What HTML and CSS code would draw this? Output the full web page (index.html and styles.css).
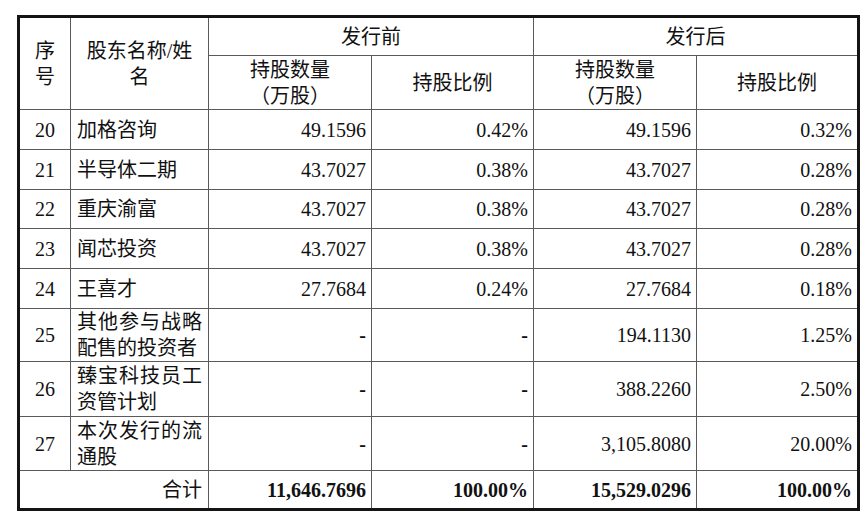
FILE: index.html
```html
<!DOCTYPE html>
<html lang="zh">
<head>
<meta charset="utf-8">
<title>股东持股情况</title>
<link rel="stylesheet" href="styles.css">
</head>
<body>
<div class="page">
<table class="holders">
  <colgroup>
    <col class="c-no">
    <col class="c-name">
    <col class="c-num">
    <col class="c-pct">
    <col class="c-num">
    <col class="c-pct">
  </colgroup>
  <thead>
    <tr class="h1">
      <th rowspan="2" class="center">序<br>号</th>
      <th rowspan="2" class="center">股东名称/姓<br>名</th>
      <th colspan="2" class="center">发行前</th>
      <th colspan="2" class="center">发行后</th>
    </tr>
    <tr class="h2">
      <th class="center">持股数量<br>（万股）</th>
      <th class="center">持股比例</th>
      <th class="center">持股数量<br>（万股）</th>
      <th class="center">持股比例</th>
    </tr>
  </thead>
  <tbody>
    <tr class="r1"><td class="no">20</td><td class="name">加格咨询</td><td class="num">49.1596</td><td class="num">0.42%</td><td class="num">49.1596</td><td class="num">0.32%</td></tr>
    <tr class="r1"><td class="no">21</td><td class="name">半导体二期</td><td class="num">43.7027</td><td class="num">0.38%</td><td class="num">43.7027</td><td class="num">0.28%</td></tr>
    <tr class="r1b"><td class="no">22</td><td class="name">重庆渝富</td><td class="num">43.7027</td><td class="num">0.38%</td><td class="num">43.7027</td><td class="num">0.28%</td></tr>
    <tr class="r1"><td class="no">23</td><td class="name">闻芯投资</td><td class="num">43.7027</td><td class="num">0.38%</td><td class="num">43.7027</td><td class="num">0.28%</td></tr>
    <tr class="r1"><td class="no">24</td><td class="name">王喜才</td><td class="num">27.7684</td><td class="num">0.24%</td><td class="num">27.7684</td><td class="num">0.18%</td></tr>
    <tr class="r2a"><td class="no">25</td><td class="name wrap">其他参与战略配售的投资者</td><td class="num dash">-</td><td class="num dash">-</td><td class="num">194.1130</td><td class="num">1.25%</td></tr>
    <tr class="r2b"><td class="no">26</td><td class="name wrap">臻宝科技员工资管计划</td><td class="num dash">-</td><td class="num dash">-</td><td class="num">388.2260</td><td class="num">2.50%</td></tr>
    <tr class="r2c"><td class="no">27</td><td class="name wrap">本次发行的流通股</td><td class="num dash">-</td><td class="num dash">-</td><td class="num">3,105.8080</td><td class="num">20.00%</td></tr>
  </tbody>
  <tfoot>
    <tr class="total">
      <td colspan="2" class="total-label">合计</td>
      <td class="num bold">11,646.7696</td>
      <td class="num bold">100.00%</td>
      <td class="num bold">15,529.0296</td>
      <td class="num bold">100.00%</td>
    </tr>
  </tfoot>
</table>
</div>
</body>
</html>
```

FILE: styles.css
```css
html, body {
  margin: 0;
  padding: 0;
  background: #ffffff;
}

.page {
  padding: 15px 0 0 17px;
}

.holders {
  border-collapse: collapse;
  table-layout: fixed;
  width: 841px;
  border: 3px solid #141414;
  font-family: "Liberation Serif", "Noto Sans CJK SC", serif;
  font-size: 20px;
  line-height: 26px;
  color: #111111;
}

.c-no { width: 52px; }
.c-name { width: 138px; }
.c-num { width: 163px; }
.c-pct { width: 162px; }

.holders th,
.holders td {
  border: 1px solid #5a5a5a;
  padding: 0 5px;
  vertical-align: middle;
  font-weight: normal;
  overflow: hidden;
}

.holders .center {
  text-align: center;
}

.h1 { height: 39px; }
.h2 { height: 54px; }
.r1 { height: 40px; }
.r1b { height: 39px; }
.r2a { height: 53px; }
.r2b { height: 55px; }
.r2c { height: 54px; }
.total { height: 39px; }

.holders .no {
  text-align: center;
  padding: 0;
}

.holders .name {
  text-align: left;
  padding: 0 6px;
}

.holders .wrap {
  text-align: justify;
  text-align-last: left;
}

.holders .num {
  text-align: right;
  padding: 0 5px 0 0;
}

.holders .dash {
  font-weight: bold;
}

.holders .bold {
  font-weight: bold;
}

.holders .total-label {
  text-align: right;
  padding: 0 6px 0 0;
}
```
